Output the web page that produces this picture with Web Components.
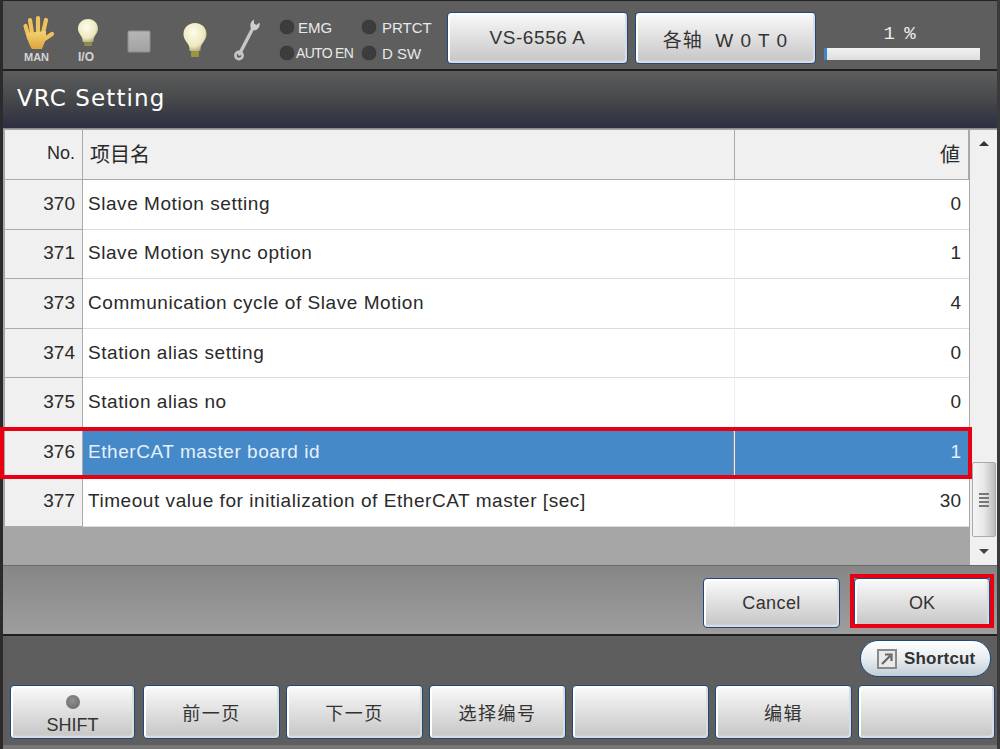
<!DOCTYPE html>
<html lang="zh"><head><meta charset="utf-8"><title>VRC Setting</title>
<style>
html,body{margin:0;padding:0;background:#4a4a4a;overflow:hidden}
body{font-family:"Liberation Sans","Noto Sans CJK SC",sans-serif}
</style></head><body>
<hmi-screen>
  <hmi-topbar></hmi-topbar>
  <hmi-title>VRC Setting</hmi-title>
  <hmi-panel>
    <hmi-row head no="No." val="値"><span>项目名</span></hmi-row>
    <hmi-row no="370" val="0">Slave Motion setting</hmi-row>
    <hmi-row no="371" val="1">Slave Motion sync option</hmi-row>
    <hmi-row no="373" val="4">Communication cycle of Slave Motion</hmi-row>
    <hmi-row no="374" val="0">Station alias setting</hmi-row>
    <hmi-row no="375" val="0">Station alias no</hmi-row>
    <hmi-row no="376" val="1" selected>EtherCAT master board id</hmi-row>
    <hmi-row no="377" val="30">Timeout value for initialization of EtherCAT master [sec]</hmi-row>
  </hmi-panel>
  <hmi-actions></hmi-actions>
  <hmi-footer></hmi-footer>
</hmi-screen>
<script>
function def(name,html){
  customElements.define(name,class extends HTMLElement{
    connectedCallback(){
      if(this.shadowRoot)return;
      const r=this.attachShadow({mode:'open'});
      r.innerHTML=typeof html==='function'?html(this):html;
    }
  });
}
const CJK='"Liberation Sans","Noto Sans CJK SC",sans-serif';

def('hmi-screen',`<style>
:host{display:flex;flex-direction:column;width:1000px;height:749px;box-sizing:border-box;border-left:3px solid #2b2b2b;border-right:3px solid #3a3a3a;background:#5e5e5e}
</style><slot></slot>`);

def('hmi-btn',h=>`<style>
:host{display:flex;align-items:center;justify-content:center;flex:none;box-sizing:border-box;width:${h.getAttribute('w')||136}px;height:${h.getAttribute('h')||54}px;border:1px solid #1d4a7c;border-radius:4px;background:linear-gradient(#fbfbfb,#f2f2f2 15%,#c9c9c9 92%,#d4d4d4);box-shadow:inset 2px 2px 0 #fff,inset -2px -2px 0 #dcdcdc;color:#333;font:${h.getAttribute('fs')||18}px ${CJK};white-space:pre;letter-spacing:${h.getAttribute('ls')||0}px}
</style><slot></slot>`);

def('hmi-led',h=>`<style>
:host{display:flex;align-items:center;color:#e8e8e8;font:${h.getAttribute('fs')||15}px ${CJK};height:16px;letter-spacing:${h.getAttribute('ls')||0}px}
i{flex:none;width:14px;height:14px;border-radius:50%;background:#3c3c3e;box-shadow:0 0 1px #222;margin-right:${h.getAttribute('gap')||4}px}
</style><i></i><slot></slot>`);

def('hmi-topbar',`<style>
:host{display:flex;align-items:flex-start;height:71px;box-sizing:border-box;border-top:1px solid #222;border-bottom:2px solid #1e1e1e;background:#5e5e5e;flex:none}
.ic{flex:none;display:block}
.leds{display:grid;grid-template-columns:82px 70px;grid-auto-rows:26px;margin:18px 0 0 0;white-space:nowrap}
.btns{display:flex;gap:7px;margin:11px 0 0 15px}
.pct{width:156px;margin-left:8px;display:flex;flex-direction:column;align-items:center;padding-top:23px}
.pct span{font:19px "Liberation Mono",monospace;letter-spacing:-1px;color:#eee;height:24px;line-height:20px;white-space:pre;margin-right:6px}
.bar{width:156px;height:12px;background:linear-gradient(#f2f2f2,#dedede);box-sizing:border-box;border-left:3px solid #3f86c9}
.lbl{font:11px "Liberation Sans",sans-serif;font-weight:bold;fill:#d4d4d4}
</style>
<svg class="ic" width="277" height="68" viewBox="0 0 277 68" aria-hidden="true">
 <defs>
  <radialGradient id="b" cx=".42" cy=".35" r=".7"><stop offset="0" stop-color="#fdfcec"/><stop offset=".7" stop-color="#ece8bc"/><stop offset="1" stop-color="#a8a578"/></radialGradient>
  <linearGradient id="h" x1="0" y1="0" x2="0" y2="1"><stop offset="0" stop-color="#f4d272"/><stop offset="1" stop-color="#dca63c"/></linearGradient>
  <linearGradient id="sq" x1="0" y1="0" x2="0" y2="1"><stop offset="0" stop-color="#b6b6b6"/><stop offset="1" stop-color="#a2a2a2"/></linearGradient>
 </defs>
 <g transform="translate(-3 -1)">
  <path d="M29 38 L25.500 26 M32 33 L30 20 M38 33 L38 18 M43 33 L46 20 M43 40 L52 34" fill="none" stroke="#eec25c" stroke-width="4.200" stroke-linecap="round"/>
  <path d="M27 33 L46 31 L46 39 L42 49 L32 49 C29 44 27 40 27 33 Z" fill="url(#h)"/>
 </g>
 <path d="M85 18c6 0 10 4.500 10 9.500 0 4-2.500 6-3.700 8.500-.7 1.500-.8 3-.9 5h-10.800c-.1-2-.2-3.500-.9-5-1.200-2.500-3.700-4.500-3.700-8.500 0-5 4-9.500 10-9.500z" fill="url(#b)"/>
 <rect x="81" y="41" width="8" height="4" rx="1" fill="#8d8a50"/>
 <rect x="125" y="30" width="22" height="21" rx="1" fill="url(#sq)" stroke="#8e8e8e"/>
 <path d="M192 22c7 0 11.500 5 11.500 11 0 5-3 7.500-5 11-.9 1.600-1 3.500-1.100 6h-10.800c-.1-2.500-.2-4.400-1.100-6-2-3.500-5-6-5-11 0-6 4.500-11 11.500-11z" fill="url(#b)"/>
 <rect x="188" y="50" width="8" height="6" rx="1" fill="#9c9440"/>
 <path d="M236.500 53 L250 27" stroke="#c6c6c6" stroke-width="3.400" stroke-linecap="round"/>
 <path d="M251 18.500 C247.500 20.500 246.500 24 248 28 L252 29.500 C255.500 28.500 257.500 25 256.500 21.500 L253.500 24 L251 22.500 Z" fill="#cfcfcf"/>
 <circle cx="236" cy="54.500" r="3.600" fill="none" stroke="#c6c6c6" stroke-width="2.600"/>
 <text class="lbl" x="21" y="60">MAN</text>
 <text class="lbl" x="75" y="60" style="font-size:12px">I/O</text>
</svg>
<div class="leds">
 <hmi-led>EMG</hmi-led><hmi-led gap="6">PRTCT</hmi-led>
 <hmi-led gap="2" fs="14" ls="-.7">AUTO EN</hmi-led><hmi-led gap="6">D SW</hmi-led>
</div>
<div class="btns">
 <hmi-btn w="181" h="52" fs="19" ls=".6">VS-6556 A</hmi-btn>
 <hmi-btn w="181" h="52" fs="19" ls="1">各轴  W 0 T 0</hmi-btn>
</div>
<div class="pct"><span>1 %</span><div class="bar"></div></div>`);

def('hmi-title',`<style>
:host{display:flex;align-items:center;flex:none;height:57px;padding:0 0 4px 14px;box-sizing:border-box;background:linear-gradient(#5d5d5d,#444649 55%,#2d2e42);color:#fff;font:23px "DejaVu Sans",sans-serif;letter-spacing:1.1px}
</style><slot></slot>`);

def('hmi-panel',`<style>
:host{display:grid;grid-template-columns:965px 27px;flex:none;height:438px;padding:1px 0 0 2px;background:#a6a6a6;border-top:1px solid #8c8c8c;border-bottom:1px solid #6a6a6a;box-sizing:border-box;width:994px}
.tbl{display:grid;grid-template-rows:50px repeat(7,49.6px);align-content:start;background:#a6a6a6}
.sb{display:flex;flex-direction:column;align-items:center;background:#f0f0f0;padding:11px 0 11px}
.up,.dn{width:0;height:0;border:5px solid transparent;flex:none}
.up{border-top:0;border-bottom:5px solid #333}
.dn{border-bottom:0;border-top:5px solid #444}
.sp{flex:1}
.th{flex:none;box-sizing:border-box;width:24px;height:75px;margin:0 0 12px;border:1px solid #aaa;border-radius:2px;background:linear-gradient(90deg,#f4f4f4,#e8e8e8 50%,#bcbcbc);display:flex;flex-direction:column;gap:2px;align-items:center;justify-content:center}
.th b{display:block;width:10px;height:2px;background:#777}
</style>
<div class="tbl"><slot></slot></div>
<div class="sb"><i class="up"></i><i class="sp"></i><div class="th"><b></b><b></b><b></b><b></b></div><i class="dn"></i></div>`);

def('hmi-row',h=>{
 const head=h.hasAttribute('head'),sel=h.hasAttribute('selected');
 return `<style>
:host{display:grid;grid-template-columns:78px 651px 235px;min-height:0;font:${head?20:19}px ${CJK};color:${sel?'#e6f0fb':'#2a2a2a'};position:relative}
div{display:flex;align-items:center;box-sizing:border-box;white-space:nowrap;overflow:hidden;padding-bottom:${head?2:1}px}
.no{justify-content:flex-end;padding-right:7px;background:#f0f0f0;color:#2a2a2a;border-right:1px solid #aaa;border-bottom:1px solid #aaa;${head?'font-size:18px;':''}}
.nm{padding-left:${head?7:5}px;letter-spacing:${head?0:.55}px;background:${sel?'#4589c8':head?'#f0f0f0':'#fff'};border-bottom:1px solid ${head?'#aaa':'#dcdcdc'};${sel?'border-right:1px dotted #d08a40;':''}}
.v{justify-content:flex-end;padding-right:8px;background:${sel?'#4589c8':head?'#f0f0f0':'#fff'};border-left:1px solid ${sel?'#eee':head?'#aaa':'#eee'};border-bottom:1px solid ${head?'#aaa':'#dcdcdc'};${head?'border-right:1px solid #aaa;':''}}
.mark{position:absolute;left:-5px;top:-1px;right:-2px;bottom:-1px;border:4px solid #e60012;z-index:2;pointer-events:none}
</style><div class="no">${h.getAttribute('no')}</div><div class="nm"><slot></slot></div><div class="v">${h.getAttribute('val')}</div>${sel?'<span class="mark"></span>':''}`});

def('hmi-actions',`<style>
:host{display:flex;justify-content:flex-end;align-items:flex-start;gap:14px;flex:none;height:70px;box-sizing:border-box;padding:12px 7px 0 0;background:linear-gradient(#868686,#9e9e9e);border-bottom:2px solid #1e1e1e}
.ok{position:relative;display:block}
.ok::after{content:"";position:absolute;inset:-4px -4px 0 -4px;border:4px solid #e60012;pointer-events:none}
</style>
<hmi-btn w="137" h="50" fs="18" ls=".4">Cancel</hmi-btn>
<div class="ok"><hmi-btn w="136" h="50" fs="18">OK</hmi-btn></div>`);

def('hmi-footer',`<style>
:host{display:flex;flex-direction:column;flex:1;box-sizing:border-box;padding:4px 3px 0 7px;background:#5e5e5e;border-bottom:4px solid #777}
.sc{align-self:flex-end;display:flex;align-items:center;gap:7px;box-sizing:border-box;width:131px;height:37px;margin-right:3px;padding-left:16px;border:1px solid #1d4a7c;border-radius:18px;background:linear-gradient(#fff,#e8edf0 50%,#c3ced6);color:#333;font:bold 17px ${CJK};letter-spacing:.2px}
.row{display:flex;gap:6px;margin-top:8px}
.shift{margin-right:2px}
.stack{display:flex;flex-direction:column;align-items:center;padding-top:6px}
.stack i{display:block;width:14px;height:14px;border-radius:50%;background:radial-gradient(circle at 45% 40%,#8f8f8f,#666);margin-bottom:6px}
.stack span{line-height:20px}
.ic{display:block;flex:none}
</style>
<div class="sc"><svg class="ic" width="20" height="20" viewBox="0 0 20 20" aria-hidden="true"><rect x="1" y="1" width="18" height="18" fill="#e9e9e9" stroke="#8a8a8a" stroke-width="2"/><path d="M5 15 L13 7 M8 5.500h6.500V12" fill="none" stroke="#666" stroke-width="2.200"/></svg><span>Shortcut</span></div>
<div class="row">
 <hmi-btn class="shift" w="125"><div class="stack"><i></i><span>SHIFT</span></div></hmi-btn>
 <hmi-btn w="137" ls="1.500">前一页</hmi-btn>
 <hmi-btn w="137" ls="1.500">下一页</hmi-btn>
 <hmi-btn w="137" ls="1.500">选择编号</hmi-btn>
 <hmi-btn w="137"></hmi-btn>
 <hmi-btn w="137" ls="1.500">编辑</hmi-btn>
 <hmi-btn w="137"></hmi-btn>
</div>`);
</script>
</body></html>
